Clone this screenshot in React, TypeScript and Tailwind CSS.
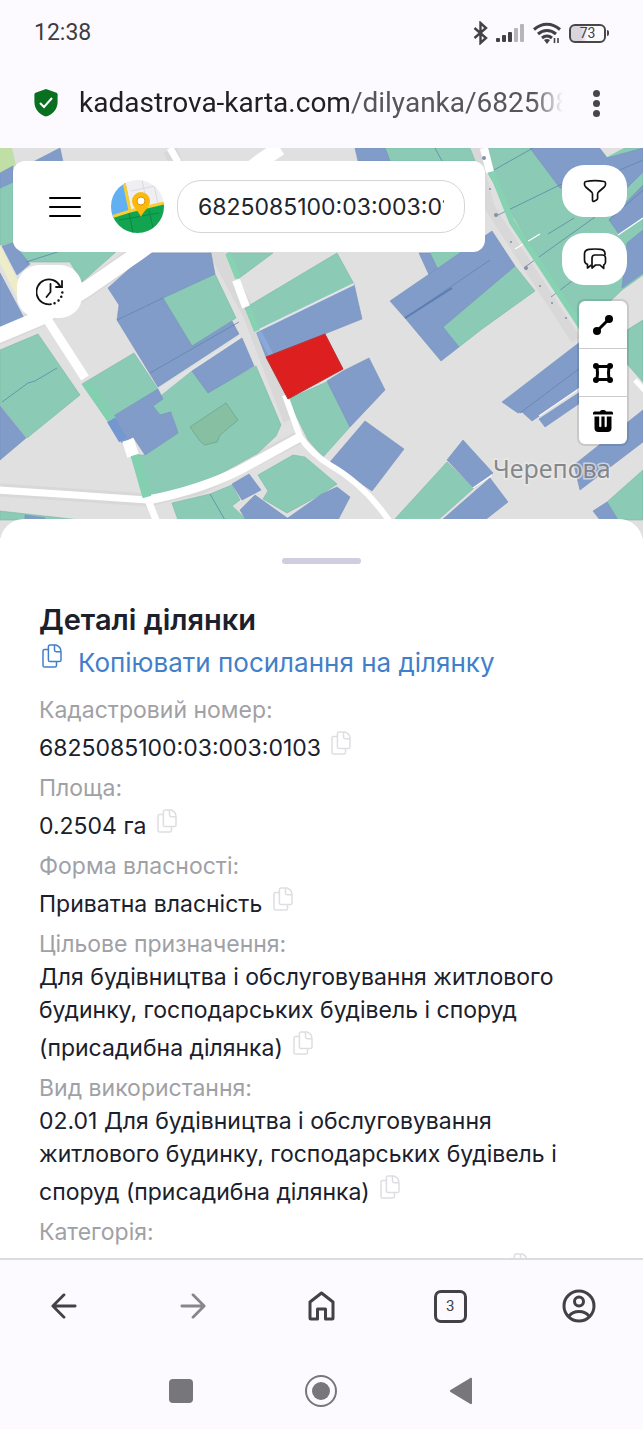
import type React from "react"

interface Detail {
  label: string
  value: string
}

const details: Detail[] = [
  { label: "Кадастровий номер:", value: "6825085100:03:003:0103" },
  { label: "Площа:", value: "0.2504 га" },
  { label: "Форма власності:", value: "Приватна власність" },
  {
    label: "Цільове призначення:",
    value: "Для будівництва і обслуговування житлового будинку, господарських будівель і споруд (присадибна ділянка)",
  },
  {
    label: "Вид використання:",
    value: "02.01 Для будівництва і обслуговування житлового будинку, господарських будівель і споруд (присадибна ділянка)",
  },
  { label: "Категорія:", value: "" },
]

const greenPlots = [
  "0,188 13,182 13,243 0,245",
  "15,245 118,250 82,282 70,262 25,262",
  "163,298 215,274 236,318 192,346",
  "82,384 134,353 158,389 107,420",
  "133,455 145,455 178,433 172,412 160,415 153,406 162,395 192,371 208,392 256,366 281,425 276,436 258,453 200,485 150,497",
  "0,350 38,334 80,395 27,438 0,405",
  "0,511 80,520 0,520",
  "172,503 210,494 232,485 240,500 232,506 247,520 178,520",
  "258,475 293,455 305,457 337,484 322,494 287,513 263,499 268,491",
  "227,253 273,253 238,279",
  "245,308 337,253 354,284 255,332",
  "288,399 329,381 350,427 323,457 308,440",
  "385,148 470,148 475,161 390,161",
  "430,253 485,240 480,258 439,273",
  "443,327 515,266 535,291 482,329 459,347",
  "483,148 643,148 643,275 622,290 580,330 489,175",
  "627,330 643,320 643,382 627,364",
  "394,520 447,462 474,488 438,520",
  "607,502 643,470 643,520 618,520",
]

const bluePlots = [
  "33,162 60,148 63,162",
  "0,173 13,166 13,182 0,188",
  "2,246 13,243 30,264 17,275",
  "0,273 24,318 0,332",
  "147,253 211,253 215,274 163,298 192,346 232,321 239,334 158,387 117,320 119,305 108,288",
  "107,420 158,389 163,399 153,406 160,415 171,412 178,433 145,455 133,437 122,443",
  "192,371 242,338 254,366 208,393",
  "0,406 26,438 0,460",
  "25,515 45,518 45,520 25,520",
  "232,484 249,474 261,490 242,500",
  "240,510 255,495 290,520 246,520",
  "285,520 322,494 337,487 350,497 338,520",
  "256,331 354,284 362,319 322,335 266,357",
  "327,381 343,371 369,358 385,390 350,427",
  "330,462 365,421 404,449 372,491",
  "355,148 385,148 390,161 358,161",
  "419,253 430,253 439,272 430,277",
  "390,301 492,231 515,266 443,327 459,347 441,361 405,318",
  "530,148 600,148 607,158 643,148 643,172 627,188 560,188",
  "609,220 643,185 643,217 619,234",
  "627,243 643,230 643,273 622,288",
  "502,402 580,342 580,388 532,421 522,412 518,413",
  "539,419 580,392 580,403 545,427",
  "574,465 643,410 643,442 580,490",
  "447,460 463,440 493,473 474,488",
  "442,520 490,478 508,502 485,520",
  "593,511 607,502 618,520 600,520",
]

const plotLines = [
  "M117 320 163 298 M150 373 239 322 M2 402 28 383 35 381 57 368 M26 262 70 248",
  "M210 494 225 520 M405 318 490 260 M520 413 580 368 M494 170 533 148",
  "M496 216 570 180 M548 234 574 218 M525 267 595 217 M551 297 580 275",
  "M435 148 442 161 M585 185 643 160 M609 220 643 190",
]

const CopyIcon: React.FC = () => (
  <svg width="20" height="24" viewBox="0 0 20 24" fill="none" stroke="currentColor" strokeWidth="1.5" strokeLinejoin="round" aria-hidden="true">
    <path d="M8 1h6c3 1 5 4 5 7v8c0 1-.6 1.600-1.600 1.600H8c-1 0-1.600-.6-1.600-1.600V2.600C6.400 1.600 7 1 8 1Z" />
    <path d="M12.500 1v5c0 1 .6 1.700 1.700 1.700H19" />
    <path d="M6.400 5.500H2.500C1.500 5.500 1 6 1 7v14.400C1 22.500 1.600 23 2.600 23h10.200c1 0 1.700-.5 1.700-1.500v-3.900" />
  </svg>
)

const StatusBar: React.FC = () => (
  <div className="flex h-[66px] items-center justify-between px-[34px] font-[Roboto,sans-serif]">
    <span className="text-[23px] leading-8 text-[#3d3d43]">12:38</span>
    <div className="flex items-center gap-2 text-[#414146]">
      <svg width="15" height="24" viewBox="0 0 15 24" fill="none" stroke="currentColor" strokeWidth="2.400" aria-hidden="true">
        <path d="m1.500 7 11.500 10-5.500 5V2L13 7 1.500 17" />
      </svg>
      <svg width="29" height="20" viewBox="0 0 29 20" aria-hidden="true">
        <g fill="currentColor">
          <rect x="0" y="15" width="4" height="4" rx="1" />
          <rect x="6" y="12" width="4" height="7" rx="1" />
          <rect x="12" y="9" width="4" height="10" rx="1" />
        </g>
        <g fill="#b7b5bc">
          <rect x="18" y="5" width="4" height="14" rx="1" />
          <rect x="24" y="1" width="4" height="18" rx="1" />
        </g>
      </svg>
      <svg width="28" height="22" viewBox="0 0 28 22" fill="none" stroke="currentColor" strokeWidth="3" aria-hidden="true">
        <path d="M1 7.500C9 .5 19 .5 27 7.500M5 12c5.500-4.800 12.500-4.800 18 0M9 16c3-2.600 7-2.600 10 0" />
        <path d="m11 18 3 4 3-4c-2-1.300-4-1.300-6 0Z" fill="currentColor" stroke="none" />
        <path d="M21.500 16v5m3.500-5v5" strokeWidth="1.600" />
      </svg>
      <div className="flex items-center">
        <span className="flex h-[19px] w-[37px] items-center justify-center rounded-[6px] border-2 border-[#46464b] bg-linear-to-r from-[#d8d6dc] from-30% to-[#fcfaff] to-50% text-[14px] leading-4">
          73
        </span>
        <span className="ml-px h-[6px] w-[2px] rounded-r bg-[#46464b]" />
      </div>
    </div>
  </div>
)

const AddressBar: React.FC = () => (
  <div className="flex h-[82px] items-center pb-2 pl-[34px] pr-[43px] font-[Roboto,sans-serif]">
    <svg className="shrink-0" width="24" height="28" viewBox="0 0 24 28" aria-hidden="true">
      <path d="M12 0 1.500 3.800C.8 4.100.4 4.700.4 5.400V13c0 7 5 12.500 11.600 14.600C18.600 25.500 23.600 20 23.600 13V5.400c0-.7-.4-1.300-1.100-1.600Z" fill="#08701f" />
      <path d="m6 14 4 4 8-9" fill="none" stroke="#fff" strokeWidth="2" />
    </svg>
    <div className="ml-[21px] min-w-0 flex-1 overflow-hidden whitespace-nowrap text-[28px] leading-9 text-[#202024] mask-r-from-94% mask-r-to-100%">
      kadastrova-karta.com<span className="text-[#55555b]">/dilyanka/682508</span>
    </div>
    <button type="button" aria-label="Меню браузера" className="ml-[30px] flex shrink-0 flex-col gap-[3px]">
      <span className="size-[7px] rounded-full bg-[#46464b]" />
      <span className="size-[7px] rounded-full bg-[#46464b]" />
      <span className="size-[7px] rounded-full bg-[#46464b]" />
    </button>
  </div>
)

const CadastreMap: React.FC = () => (
  <svg className="absolute inset-0 size-full" viewBox="0 148 643 390" preserveAspectRatio="xMidYMin slice" aria-hidden="true">
    <rect y="148" width="643" height="390" fill="#e0e0e0" />
    <path d="M0 148h12l4 18-16 7Z" fill="#bfdfa6" />
    <path d="M-4 246 22 298" stroke="#eeedc9" strokeWidth="8" />
    <g fill="none" stroke="#d8d8d8">
      <path d="M170 150 215 250 250 315 290 420" strokeWidth="14" />
      <path d="M474 148 490 208 576 340" strokeWidth="10" />
      <path d="M0 490 148 500 200 488 300 437" strokeWidth="13" />
      <path d="M-5 337 40 318 85 290 140 252" strokeWidth="18" />
    </g>
    <g fill="#8bcab5" stroke="#79b8a8" strokeWidth="0.600">
      {greenPlots.map((points) => (
        <polygon key={points} points={points} />
      ))}
    </g>
    <g fill="#819cc9" stroke="#7590bd" strokeWidth="0.600">
      {bluePlots.map((points) => (
        <polygon key={points} points={points} />
      ))}
    </g>
    <path d="M600 148h24l-17 9Z" fill="#e0e0e0" />
    <g fill="none" stroke="#5f86a8" strokeWidth="0.800">
      {plotLines.map((d) => (
        <path key={d} d={d} />
      ))}
    </g>
    <path d="M405 318 452 288" stroke="#5b7cb5" strokeWidth="2" />
    <path d="m190 427 36-24 12 17-18 15-3 7-12 3-5-4Z" fill="#86bfa2" stroke="#73ad93" />
    <g fill="none" stroke="#fff">
      <path d="M-5 337 40 318 85 290 140 252 262 160 280 148" strokeWidth="15" />
      <path d="M45 316 85 378" strokeWidth="9" />
      <path d="M128 440 133 456" strokeWidth="12" />
      <path d="M-2 490 75 495 148 500 158 525" strokeWidth="7" />
      <path d="M148 500 Q200 490 240 470 L300 437" strokeWidth="9" />
      <path d="M285 395 300 437 Q312 454 330 465 Q365 485 390 522" strokeWidth="6" />
      <path d="M170 148 178 162" strokeWidth="7" />
      <path d="M236 280 246 307" strokeWidth="8" />
      <path d="M484 148 490 172" strokeWidth="8" />
      <path d="M515 249 540 234M618 235l25-17M473 488l19-13M539 416l41-28" strokeWidth="1.200" />
      <path d="m635 380 10 11" strokeWidth="5" />
    </g>
    <path d="m160 390 80-53M255 332l99-48" fill="none" stroke="#dfe5e8" strokeWidth="2" />
    <path d="M87 384 112 420M135 455 147 497" fill="none" stroke="#83d0b1" strokeWidth="9" />
    <path d="M111 420 123 440" stroke="#7497cf" strokeWidth="9" />
    <path d="M228 253 238 278M248 308 257 331M492 172 512 222 582 328" fill="none" stroke="#86d2b2" strokeWidth="6" />
    <path d="M259 332 271 355" stroke="#89a9d8" strokeWidth="5" />
    <polygon points="266,357 325,334 343,369 288,399" fill="#dd201f" stroke="#b43434" />
    <g fill="#8591a5">
      <circle cx="484" cy="158" r="2" />
      <circle cx="490" cy="189" r="1" />
      <circle cx="496" cy="215" r="2" />
      <circle cx="511" cy="242" r="1" />
      <circle cx="526" cy="268" r="2" />
      <circle cx="540" cy="286" r="1" />
      <circle cx="552" cy="303" r="1" />
      <circle cx="566" cy="318" r="1" />
    </g>
    <text x="493" y="478" fontSize="25" fill="#74767a" fillOpacity="0.850" stroke="#ececec" strokeOpacity="0.700" strokeWidth="3" paintOrder="stroke" className="font-['Noto_Sans',sans-serif]">
      Черепова
    </text>
  </svg>
)

const SiteLogo: React.FC = () => (
  <svg width="53" height="53" viewBox="0 0 53 53" aria-hidden="true">
    <clipPath id="logo-disc">
      <circle cx="26.500" cy="26.500" r="26.500" />
    </clipPath>
    <g clipPath="url(#logo-disc)">
      <rect width="53" height="53" fill="#eeeef3" />
      <path d="M0 0h14l6 30-20 7Z" fill="#62b0f2" />
      <path d="M20 11 53 4M31 0l5 24M42 0l5 24" stroke="#d9d9e4" strokeWidth="1" />
      <path d="M0 37 19 31 53 23V53H0Z" fill="#13a451" />
      <path d="M13 2 19 31M0 37 19 31 53 23" fill="none" stroke="#f5cf35" strokeWidth="3" />
      <path d="m8 40 40-7M18 33l4 20M38 30l4 18" stroke="#078b43" strokeWidth="1" />
      <path d="M30 37C27 30 21 27 21 21a9 9 0 0 1 18 0c0 6-6 9-9 16Z" fill="#fbb90e" />
      <circle cx="30" cy="21" r="4" fill="#fff" stroke="#dd9407" />
    </g>
  </svg>
)

const MapControls: React.FC = () => (
  <div className="relative flex items-start justify-between pl-[13px] pr-4 pt-[13px]">
    <div className="min-w-0 flex-1">
      <div className="flex h-[91px] items-center rounded-xl bg-white pl-9 pr-5">
        <button type="button" aria-label="Меню" className="flex w-8 shrink-0 flex-col gap-[7px]">
          <span className="h-[2px] rounded bg-black" />
          <span className="h-[2px] rounded bg-black" />
          <span className="h-[2px] rounded bg-black" />
        </button>
        <a href="#home" aria-label="Кадастрова карта" className="ml-[30px] shrink-0">
          <SiteLogo />
        </a>
        <input
          type="text"
          aria-label="Пошук ділянки"
          defaultValue="6825085100:03:003:0103"
          className="ml-[13px] h-[53px] min-w-0 flex-1 rounded-[24px] border border-[#d5d5d8] px-5 text-[23px] text-[#20242c] outline-none"
        />
      </div>
      <button type="button" aria-label="Історія" className="ml-1 mt-[13px] flex h-[53px] w-[65px] items-center justify-center rounded-[22px] bg-white">
        <svg width="28" height="28" viewBox="0 0 28 28" fill="none" stroke="#111" strokeWidth="1.800" strokeLinecap="round" aria-hidden="true">
          <path d="M15 26.200A12.500 12.500 0 1 1 24 8M26 3v6h-6M14.500 6v8l-4 5" />
          <path d="M18.500 25.300h.1M22.500 22.500h.1M25.200 18.800h.1M26.300 14.500h.1" strokeWidth="2.400" />
        </svg>
      </button>
    </div>

    <div className="ml-[77px] flex shrink-0 flex-col items-end gap-4 pt-1">
      <button type="button" aria-label="Фільтр" className="flex h-[52px] w-[65px] items-center justify-center rounded-[22px] bg-white">
        <svg width="24" height="24" viewBox="0 0 24 24" fill="none" stroke="#111" strokeWidth="1.700" strokeLinejoin="round" aria-hidden="true">
          <path d="M3 2.500C8.500 1.400 15.500 1.400 21 2.500c1 .2 1.500.8 1.500 1.700v1c0 1.200-.4 2-1.200 2.800L15.500 13c-.6.6-.9 1.300-.9 2.200v4c0 .8-.4 1.400-1.100 1.800l-2.300 1.200c-.9.5-1.700 0-1.700-1V15.200c0-.9-.3-1.600-.9-2.200L2.700 8C1.900 7.200 1.500 6.400 1.500 5.200v-1c0-.9.5-1.500 1.500-1.700Z" />
        </svg>
      </button>
      <button type="button" aria-label="Повідомлення" className="flex h-[52px] w-[65px] items-center justify-center rounded-[22px] bg-white">
        <svg width="24" height="22" viewBox="0 0 24 22" fill="none" stroke="#111" strokeWidth="1.700" strokeLinejoin="round" aria-hidden="true">
          <path d="M22 7V6c0-3-1.500-4.300-4-4.600-3.500-.5-8-.5-12 0C3 1.800 1.500 3 1.500 6v5.500c0 3 1 4.300 3 4.800V20l4-3.200" />
          <path d="M12 7h7.500c2 0 3 1 3 3v4c0 1.500-.6 2.500-1.800 3v3.500L17 17h-4.500L9 20V10c0-2 1-3 3-3Z" />
        </svg>
      </button>
      <div className="flex w-[48px] flex-col divide-y divide-[#ccc] rounded-md bg-white shadow-[0_0_0_2px_rgba(0,0,0,0.100)]">
        <button type="button" aria-label="Виміряти відстань" className="flex h-[48px] items-center justify-center">
          <svg width="20" height="20" viewBox="0 0 20 20" aria-hidden="true">
            <path d="M4 16 16 4" stroke="#000" strokeWidth="3" />
            <circle cx="4" cy="16" r="4" />
            <circle cx="16" cy="4" r="4" />
          </svg>
        </button>
        <button type="button" aria-label="Виміряти площу" className="flex h-[48px] items-center justify-center">
          <svg width="20" height="20" viewBox="0 0 20 20" aria-hidden="true">
            <path d="M4 3.500h12l-.5 6.500.5 6.500H4l.5-6.500Z" fill="none" stroke="#000" strokeWidth="3" />
            <circle cx="3" cy="3" r="3" />
            <circle cx="17" cy="3" r="3" />
            <circle cx="3" cy="17" r="3" />
            <circle cx="17" cy="17" r="3" />
          </svg>
        </button>
        <button type="button" aria-label="Видалити" className="flex h-[47px] items-center justify-center">
          <svg width="20" height="22" viewBox="0 0 20 22" aria-hidden="true">
            <path d="M7 1.500C7.500.5 8 0 10 0s2.500.5 3 1.500h5c1 0 2 .5 2 1.500v1.500H0V3c0-1 1-1.500 2-1.500Z" />
            <path d="M1.500 6.500h4.700V16c0 1.600 2.200 1.600 2.200 0V6.500h3.200V16c0 1.600 2.200 1.600 2.200 0V6.500h4.700V18c0 2.600-1.400 4-4 4h-9c-2.600 0-4-1.400-4-4Z" />
          </svg>
        </button>
      </div>
    </div>
  </div>
)

const DetailsSheet: React.FC = () => (
  <section className="relative -mt-[19px] min-h-0 flex-1 overflow-hidden rounded-t-[24px] bg-white px-[39px] pt-[39px] text-[#1a202c]">
    <div className="mx-auto h-[6px] w-[79px] rounded-full bg-[#cfcddf]" />
    <h1 className="mt-9 text-[29px] font-semibold leading-10">Деталі ділянки</h1>
    <button type="button" className="flex h-[46px] items-start text-[26px] leading-[46px] text-[#427fca]">
      <span className="ml-[3px] mt-1">
        <CopyIcon />
      </span>
      <span className="ml-4">Копіювати посилання на ділянку</span>
    </button>
    <dl className="mt-2 text-[23px] leading-[33px]">
      {details.map((detail) => (
        <div key={detail.label}>
          <dt className="text-[#a0a1a6]">{detail.label}</dt>
          <dd>
            {detail.value || <span className="inline-block w-[459px]" />}{" "}
            <button type="button" aria-label="Копіювати" className="ml-1 inline-flex h-[45px] items-start pt-1 align-middle text-[#dedee2]">
              <CopyIcon />
            </button>
          </dd>
        </div>
      ))}
    </dl>
  </section>
)

const BrowserNav: React.FC = () => (
  <nav className="grid h-[94px] shrink-0 grid-cols-5 place-items-center border-t-2 border-[#dcdbe2] text-[#414146]">
    <button type="button" aria-label="Назад">
      <svg width="26" height="26" viewBox="0 0 28 28" fill="none" stroke="currentColor" strokeWidth="3" strokeLinecap="round" strokeLinejoin="round" aria-hidden="true">
        <path d="M26 14H3M14 2 2 14l12 12" />
      </svg>
    </button>
    <button type="button" aria-label="Вперед" className="text-[#87868c]">
      <svg width="26" height="26" viewBox="0 0 28 28" fill="none" stroke="currentColor" strokeWidth="3" strokeLinecap="round" strokeLinejoin="round" aria-hidden="true">
        <path d="M2 14h23M14 2l12 12-12 12" />
      </svg>
    </button>
    <button type="button" aria-label="Додому">
      <svg width="27" height="30" viewBox="0 0 27 30" fill="none" stroke="currentColor" strokeWidth="3" strokeLinejoin="round" aria-hidden="true">
        <path d="M2 11 13.500 2 25 11v16c0 .6-.4 1-1 1h-6.500V18h-8v10H3c-.6 0-1-.4-1-1Z" />
      </svg>
    </button>
    <button type="button" aria-label="Вкладки: 3" className="flex size-[33px] items-center justify-center rounded-[7px] border-3 border-[#414146] font-[Roboto,sans-serif] text-[15px] leading-4">
      3
    </button>
    <button type="button" aria-label="Профіль">
      <svg width="34" height="34" viewBox="0 0 34 34" fill="none" stroke="currentColor" strokeWidth="3" aria-hidden="true">
        <circle cx="17" cy="17" r="15" />
        <circle cx="17" cy="12.500" r="4.500" />
        <path d="M7 27c5-6 15-6 20 0" />
      </svg>
    </button>
  </nav>
)

const SystemNav: React.FC = () => (
  <nav className="flex h-[77px] shrink-0 items-center justify-center gap-[112px] pr-px text-[#77777a]">
    <button type="button" aria-label="Останні програми" className="size-6 rounded-[4px] bg-[#77777a]" />
    <button type="button" aria-label="Головний екран">
      <svg width="32" height="32" viewBox="0 0 32 32" fill="none" stroke="currentColor" strokeWidth="2" aria-hidden="true">
        <circle cx="16" cy="16" r="15" />
        <circle cx="16" cy="16" r="9" fill="currentColor" stroke="none" />
      </svg>
    </button>
    <button type="button" aria-label="Повернутися">
      <svg width="24" height="28" viewBox="0 0 24 28" fill="currentColor" aria-hidden="true">
        <path d="M23 2v24c0 1-1 1.500-2 .8L1.500 15c-.8-.6-.8-1.400 0-2L21 1.200c1-.7 2-.2 2 .8Z" />
      </svg>
    </button>
  </nav>
)

const App: React.FC = () => {
  return (
    <div className="flex h-screen flex-col bg-[#fcfaff] font-[Inter,sans-serif]">
      <header className="shrink-0">
        <StatusBar />
        <AddressBar />
      </header>
      <main className="flex min-h-0 flex-1 flex-col">
        <div className="relative h-[390px] shrink-0 overflow-hidden">
          <CadastreMap />
          <MapControls />
        </div>
        <DetailsSheet />
      </main>
      <BrowserNav />
      <SystemNav />
    </div>
  )
}

export default App
